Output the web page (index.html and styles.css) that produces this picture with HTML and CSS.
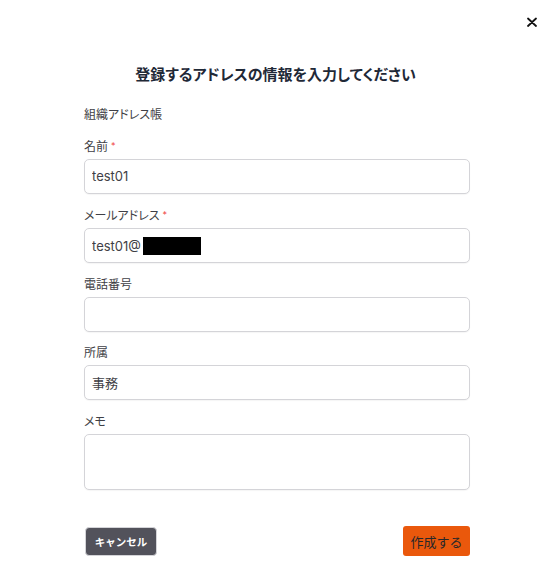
FILE: index.html
```html
<!DOCTYPE html>
<html lang="ja">
<head>
    <meta charset="UTF-8">
    <meta name="viewport" content="width=device-width, initial-scale=1.0">
    <title>アドレス登録</title>
    <link rel="stylesheet" href="styles.css">
</head>
<body>
    <div class="modal">
        <div class="modal-top">
            <button class="close-button" aria-label="閉じる">
                <svg width="10" height="10" viewBox="0 0 10 10">
                    <path d="M1 1.5 L9 9 M9 1.5 L1 9" stroke="#111" stroke-width="1.8" stroke-linecap="round"/>
                </svg>
            </button>
        </div>

        <h2 class="modal-title">登録するアドレスの情報を入力してください</h2>

        <form class="address-form">
            <div class="section-label">組織アドレス帳</div>

            <div class="field">
                <label for="name">名前<span class="required">*</span></label>
                <input type="text" id="name" value="test01">
            </div>

            <div class="field">
                <label for="email">メールアドレス<span class="required">*</span></label>
                <div class="input-wrap">
                    <input type="text" id="email" value="test01@">
                    <!-- redacted domain -->
                    <span class="redact"></span>
                </div>
            </div>

            <div class="field">
                <label for="phone">電話番号</label>
                <input type="text" id="phone">
            </div>

            <div class="field">
                <label for="dept">所属</label>
                <input type="text" id="dept" value="事務">
            </div>

            <div class="field">
                <label for="memo">メモ</label>
                <textarea id="memo"></textarea>
            </div>

            <div class="form-actions">
                <button type="button" class="cancel-button">キャンセル</button>
                <button type="button" class="submit-button">作成する</button>
            </div>
        </form>
    </div>
</body>
</html>
```

FILE: styles.css
```css
body {
    font-family: "Inter", "Noto Sans CJK JP", sans-serif;
    font-feature-settings: "palt";
    background-color: #fff;
    color: #3f3f46;
    margin: 0;
    padding: 0;
}

.modal {
    padding: 16px 14px 30px 0;
}

.modal-top {
    display: flex;
    justify-content: flex-end;
}

.close-button {
    background: none;
    border: none;
    padding: 0;
    width: 10px;
    height: 10px;
    margin-top: 1px;
    cursor: pointer;
    display: flex;
}

.modal-title {
    font-size: 15px;
    font-weight: bold;
    line-height: 24px;
    color: #1f2937;
    text-align: center;
    margin: 36px 0 19px 14px;
}

.address-form {
    width: 386px;
    margin-left: 84px;
    display: flex;
    flex-direction: column;
    gap: 12.5px;
}

.section-label,
.field label {
    font-size: 12px;
    line-height: 18px;
    color: #3f3f46;
}

.field {
    display: flex;
    flex-direction: column;
    gap: 3px;
}

.required {
    color: #ef4444;
    font-size: 9px;
    margin-left: 3px;
    vertical-align: 2px;
}

.field input,
.field textarea {
    box-sizing: border-box;
    width: 100%;
    height: 35px;
    padding: 0 7px;
    border: 1px solid #d4d4d8;
    border-radius: 5px;
    font-family: inherit;
    font-size: 13px;
    color: #3f3f46;
    background-color: #fff;
    box-shadow: 0 1px 1px rgba(0, 0, 0, 0.04);
}

.field textarea {
    height: 56px;
    resize: none;
}

.input-wrap {
    position: relative;
}

.redact {
    position: absolute;
    left: 59px;
    top: 9px;
    width: 58px;
    height: 18px;
    background-color: #000;
}

.form-actions {
    display: flex;
    justify-content: space-between;
    align-items: center;
    margin-top: 24px;
}

.cancel-button {
    background-color: #52525b;
    color: #fff;
    border: 1px solid #d4d4d8;
    border-radius: 4px;
    width: 72px;
    height: 29px;
    font-family: inherit;
    font-size: 10.5px;
    font-weight: bold;
    margin-left: 1px;
    cursor: pointer;
}

.submit-button {
    background-color: #ea580c;
    color: #27272a;
    border: none;
    border-radius: 3px;
    width: 67px;
    height: 30px;
    font-family: inherit;
    font-size: 13px;
    cursor: pointer;
}
```
